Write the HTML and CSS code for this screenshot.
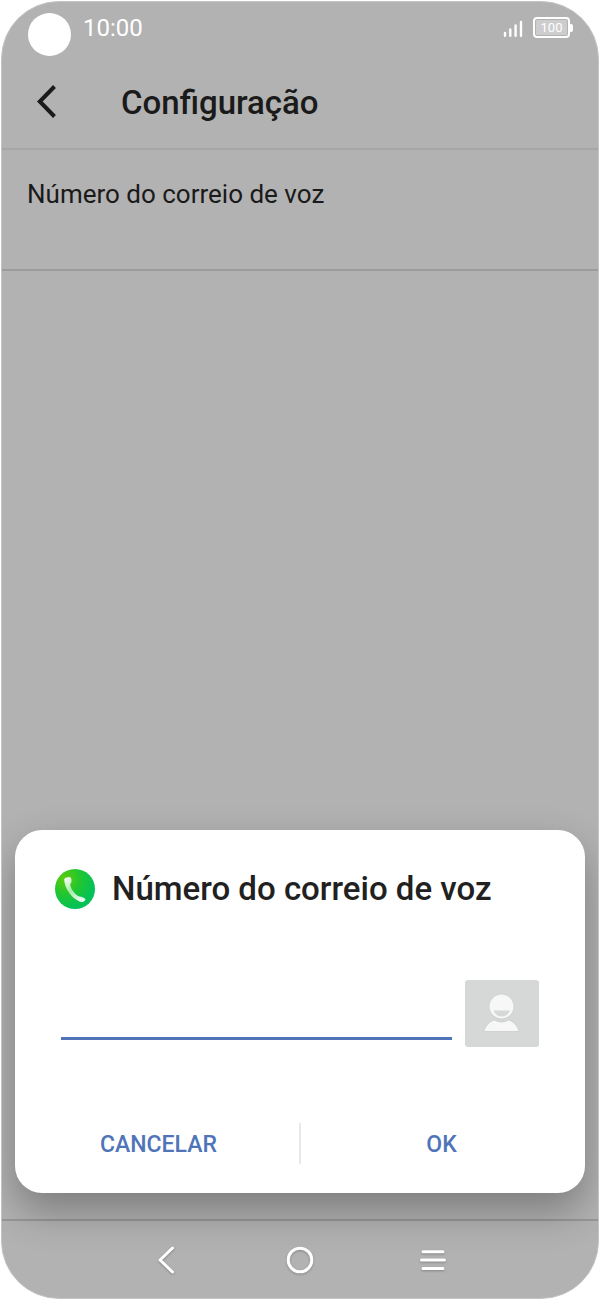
FILE: index.html
```html
<!DOCTYPE html>
<html lang="pt">
<head>
    <meta charset="UTF-8">
    <meta name="viewport" content="width=device-width, initial-scale=1.0">
    <title>Configuração</title>
    <link rel="stylesheet" href="styles.css">
</head>
<body>
    <div class="phone">
        <div class="status-bar">
            <span class="camera"></span>
            <span class="clock">10:00</span>
            <svg class="signal" width="20" height="18" viewBox="0 0 20 18" fill="none" stroke="#fff" stroke-width="2.4" stroke-linecap="round">
                <path d="M2 15.700v-2.700M7.300 15.700V9.500M12.600 15.700V5.500M18 15.700V2"/>
            </svg>
            <div class="battery"><span class="battery-level">100</span></div>
        </div>

        <header class="header">
            <button class="back" aria-label="Voltar">
                <svg width="24" height="36" viewBox="0 0 24 36" fill="none" stroke="#1a1a1a" stroke-width="4">
                    <path d="M20.500 1.500L5.800 16.500L20.500 31.500"/>
                </svg>
            </button>
            <h1>Configuração</h1>
        </header>

        <main class="content">
            <div class="item">Número do correio de voz</div>
        </main>

        <nav class="nav-bar">
            <button aria-label="Voltar">
                <svg width="40" height="40" viewBox="0 0 40 40" fill="none" stroke="#fff" stroke-width="3" stroke-linecap="round" stroke-linejoin="round">
                    <path d="M25.500 8L13 20L25.500 32"/>
                </svg>
            </button>
            <button aria-label="Início">
                <svg width="40" height="40" viewBox="0 0 40 40" fill="none" stroke="#fff" stroke-width="3">
                    <circle cx="20" cy="20" r="11.800"/>
                </svg>
            </button>
            <button aria-label="Recentes">
                <svg width="40" height="40" viewBox="0 0 40 40" fill="none" stroke="#fff" stroke-width="3" stroke-linecap="round">
                    <path d="M10 11.800h20M8.500 20h23M10 28.400h20"/>
                </svg>
            </button>
        </nav>

        <div class="dialog" role="dialog" aria-labelledby="dialogTitle">
            <div class="dialog-header">
                <svg width="40" height="40" viewBox="0 0 40 40">
                    <defs>
                        <radialGradient id="green" cx="0.25" cy="0.25" r="0.75">
                            <stop offset="0" stop-color="#5fcb0c"/>
                            <stop offset="0.5" stop-color="#22c62f"/>
                            <stop offset="1" stop-color="#04c158"/>
                        </radialGradient>
                        <linearGradient id="handset" x1="0" y1="0" x2="0.6" y2="1">
                            <stop offset="0" stop-color="#fff"/>
                            <stop offset="0.55" stop-color="#a9ebae"/>
                            <stop offset="1" stop-color="#e6faec"/>
                        </linearGradient>
                    </defs>
                    <circle cx="20" cy="20" r="20" fill="url(#green)"/>
                    <path fill="url(#handset)" d="M9.200 11C9 9.500 10.500 8.500 12 8.500L14 8C15.500 7.900 16.300 9 16.400 10.500L16.500 12.500C16.500 14 15 14.500 15.200 16C15.700 19.500 19.500 25 23 27C24.500 27.800 25.500 27.300 27 28L29.500 29.200C30.700 30 30.700 30.800 29.800 31.700C28.500 33 27 33.500 24.500 32.400C16.500 29 10 20 9.200 11Z"/>
                </svg>
                <h2 id="dialogTitle">Número do correio de voz</h2>
            </div>
            <div class="dialog-field">
                <input type="tel" aria-label="Número do correio de voz">
                <button class="contact" aria-label="Contactos">
                    <svg width="40" height="42" viewBox="0 0 40 42" fill="#f7f7f7">
                        <path stroke="#d0d1d1" stroke-width="2" paint-order="stroke" d="M2.500 38C4.500 32 8 28.500 12.500 27.500C17.500 30 22 30 26.500 27.500C31 28.500 34.500 32 36.500 38Z"/>
                        <circle stroke="#d0d1d1" stroke-width="2" paint-order="stroke" cx="19.500" cy="13.500" r="12"/>
                        <path d="M11.500 17.500h16.500C26.500 21.500 23.500 23.500 19.700 23.500S13 21.500 11.500 17.500Z" fill="#d6d8d7"/>
                    </svg>
                </button>
            </div>
            <div class="dialog-actions">
                <button>CANCELAR</button>
                <button>OK</button>
            </div>
        </div>
    </div>
</body>
</html>
```
FILE: styles.css
```css
* {
    box-sizing: border-box;
}

body {
    margin: 0;
    background-color: white;
    font-family: Roboto, sans-serif;
    color: #1a1a1a;
}

button {
    padding: 0;
    border: none;
    background: none;
    font-family: inherit;
    cursor: pointer;
}

svg {
    display: block;
}

h1, h2 {
    margin: 0;
    font-size: 33px;
    font-weight: 500;
    line-height: 40px;
}

.phone {
    position: relative;
    display: flex;
    flex-direction: column;
    min-height: calc(100vh - 2px);
    margin: 1px;
    border: 1px solid #c4c4c4;
    border-radius: 58px;
    background-color: #b2b2b2;
    overflow: hidden;
}

.status-bar {
    display: flex;
    align-items: flex-start;
    height: 56px;
    padding: 11px 25px 0 26px;
    color: white;
}

.camera {
    width: 43px;
    height: 43px;
    border-radius: 50%;
    background-color: white;
}

.clock {
    flex: 1;
    margin-left: 12px;
    font-size: 24px;
    line-height: 30px;
}

.signal {
    margin: 7px 10px 0 0;
}

.battery {
    display: flex;
    align-items: center;
    margin-top: 4px;
}

.battery::after {
    content: "";
    width: 3px;
    height: 8px;
    border-radius: 0 2px 2px 0;
    background-color: white;
}

.battery-level {
    width: 37px;
    height: 21px;
    padding: 1px;
    border: 2px solid white;
    border-radius: 4px;
    background-color: #cdcdcd;
    background-clip: content-box;
    font-size: 13px;
    line-height: 15px;
    text-align: center;
}

.header {
    display: flex;
    align-items: center;
    height: 92px;
    padding: 0 32px;
    border-bottom: 2px solid #a6a6a6;
}

.header h1 {
    margin-left: 63px;
}

.content {
    flex: 1;
}

.item {
    height: 121px;
    padding: 28px 25px;
    border-bottom: 2px solid #9c9c9c;
    font-size: 26px;
    line-height: 32px;
}

.nav-bar {
    display: flex;
    justify-content: center;
    align-items: center;
    gap: 93px;
    height: 79px;
    border-top: 2px solid #979797;
}

.nav-bar svg {
    filter: drop-shadow(0 1px 1px rgba(0,0,0,0.25));
}

.dialog {
    position: absolute;
    left: 13px;
    right: 13px;
    bottom: 105px;
    padding: 39px 0 29px;
    border-radius: 27px;
    background-color: white;
    box-shadow: 0 18px 40px rgba(0,0,0,0.3);
}

.dialog-header {
    display: flex;
    align-items: center;
    gap: 17px;
    padding: 0 40px;
}

.dialog h2 {
    color: #212121;
}

.dialog-field {
    display: flex;
    align-items: flex-end;
    gap: 13px;
    margin-top: 71px;
    padding: 0 46px;
}

.dialog-field input {
    flex: 1;
    min-width: 0;
    height: 60px;
    margin: 0 0 7px;
    padding: 0;
    border: none;
    border-bottom: 3px solid #4f74b8;
    outline: none;
    background: none;
    font-family: inherit;
    font-size: 26px;
}

.contact {
    display: flex;
    justify-content: center;
    align-items: center;
    width: 74px;
    height: 67px;
    border-radius: 3px;
    background-color: #d6d8d7;
}

.dialog-actions {
    display: flex;
    height: 41px;
    margin-top: 76px;
    padding: 0 3px;
}

.dialog-actions button {
    flex: 1;
    padding-top: 2px;
    color: #4f74b8;
    font-size: 23px;
    font-weight: 500;
}

.dialog-actions button + button {
    border-left: 2px solid #e8e8e8;
}
```
